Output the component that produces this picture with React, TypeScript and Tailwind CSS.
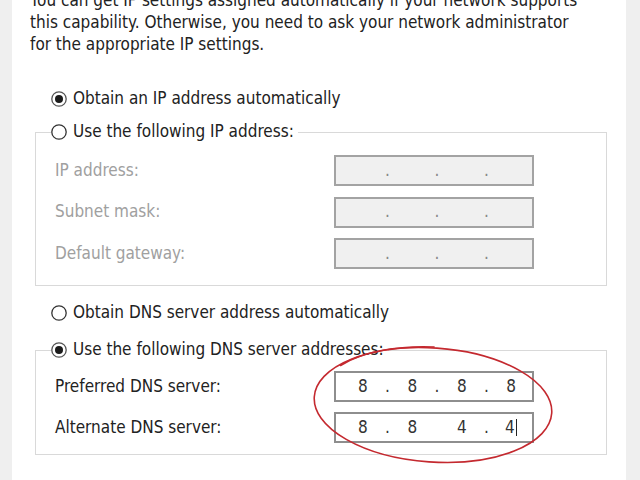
import React from "react";

type RadioProps = {
  checked?: boolean;
  label: string;
};

function Radio({ checked = false, label }: RadioProps) {
  return (
    <div className="flex h-[20px] items-center gap-[6px] bg-white pr-[4px] w-fit">
      <svg width="16" height="16" viewBox="0 0 16 16" className="shrink-0">
        <circle cx="8" cy="8" r="7.2" fill="white" stroke={checked ? "#555" : "#333"} strokeWidth="1.3" />
        {checked && <circle cx="8" cy="8" r="4" fill="#1b1b1b" />}
      </svg>
      <span className="whitespace-nowrap text-[17px] text-[#222]">{label}</span>
    </div>
  );
}

type IpFieldProps = {
  values: string[];
  disabled?: boolean;
  hideDot?: number;
  cursor?: boolean;
};

function IpField({ values, disabled = false, hideDot, cursor = false }: IpFieldProps) {
  return (
    <div
      className={`flex h-[31px] w-[200px] shrink-0 items-center border-2 pl-[6px] text-[17px] ${
        disabled ? "border-[#a3a3a3] bg-[#f0f0f0] text-[#888]" : "border-[#8e8e8e] bg-white text-[#333]"
      }`}
    >
      {values.map((v, i) => (
        <React.Fragment key={i}>
          <span className="w-[42px] text-center">
            {v}
            {cursor && i === values.length - 1 && (
              <span className="ml-[1px] inline-block h-[17px] w-[1.5px] bg-[#222] align-middle" />
            )}
          </span>
          {i < values.length - 1 && (
            <span className={`w-[8px] text-center ${hideDot === i ? "invisible" : ""}`}>.</span>
          )}
        </React.Fragment>
      ))}
    </div>
  );
}

type FieldRowProps = {
  label: string;
  disabled?: boolean;
  children: React.ReactNode;
};

function FieldRow({ label, disabled = false, children }: FieldRowProps) {
  return (
    <div className="flex items-center">
      <span className={`w-[279px] text-[17px] ${disabled ? "text-[#a0a0a0]" : "text-[#222]"}`}>{label}</span>
      {children}
    </div>
  );
}

export default function App() {
  return (
    <div className="relative flex h-[480px] w-[640px] overflow-hidden bg-[#efefef] font-['DejaVu_Sans_Condensed','DejaVu_Sans',sans-serif]">
      <div className="ml-[12px] h-full w-[614px] bg-white">
        {/* Intro text */}
        <p className="-mt-[11px] whitespace-nowrap pl-[18px] text-[17px] leading-[22px] text-[#222]">
          You can get IP settings assigned automatically if your network supports
          <br />
          this capability. Otherwise, you need to ask your network administrator
          <br />
          for the appropriate IP settings.
        </p>

        <div className="ml-[39px] mt-[34px]">
          <Radio checked label="Obtain an IP address automatically" />
        </div>

        {/* IP group */}
        <div className="ml-[23px] mt-[23px] w-[572px] border border-[#d9d9d9] pb-[16px] pl-[19px]">
          <div className="-ml-[4px] -mt-[11px]">
            <Radio label="Use the following IP address:" />
          </div>
          <div className="mt-[13px] flex flex-col gap-[10.5px]">
            <FieldRow label="IP address:" disabled>
              <IpField values={["", "", "", ""]} disabled />
            </FieldRow>
            <FieldRow label="Subnet mask:" disabled>
              <IpField values={["", "", "", ""]} disabled />
            </FieldRow>
            <FieldRow label="Default gateway:" disabled>
              <IpField values={["", "", "", ""]} disabled />
            </FieldRow>
          </div>
        </div>

        <div className="ml-[39px] mt-[17px]">
          <Radio label="Obtain DNS server address automatically" />
        </div>

        {/* DNS group */}
        <div className="ml-[23px] mt-[27px] w-[572px] border border-[#d9d9d9] pb-[11px] pl-[19px]">
          <div className="-ml-[4px] -mt-[11px]">
            <Radio checked label="Use the following DNS server addresses:" />
          </div>
          <div className="mt-[11px] flex flex-col gap-[10px]">
            <FieldRow label="Preferred DNS server:">
              <IpField values={["8", "8", "8", "8"]} />
            </FieldRow>
            <FieldRow label="Alternate DNS server:">
              <IpField values={["8", "8", "4", "4"]} hideDot={1} cursor />
            </FieldRow>
          </div>
        </div>
      </div>

      {/* Hand-drawn red ellipse */}
      <svg className="pointer-events-none absolute left-0 top-0" width="640" height="480" viewBox="0 0 640 480">
        <g transform="rotate(4 433 405)" fill="none" stroke="#c4292f" strokeWidth="1.6" strokeLinecap="round">
          <ellipse cx="433" cy="405" rx="119" ry="57" />
          <path d="M 338 372 C 360 356, 395 348, 430 347" />
        </g>
      </svg>
    </div>
  );
}
